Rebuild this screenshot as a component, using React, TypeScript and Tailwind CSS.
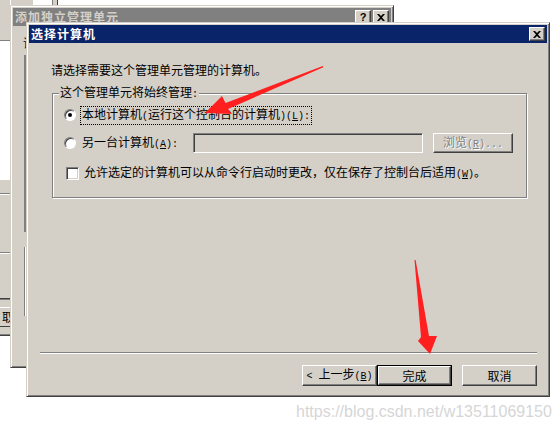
import React from "react";

// classic Windows bevels
const raised =
  "border border-t-white border-l-white border-r-[#404040] border-b-[#404040] shadow-[inset_-1px_-1px_#808080]";
const sunken =
  "border border-t-[#808080] border-l-[#808080] border-r-white border-b-white shadow-[inset_1px_1px_#404040,inset_-1px_-1px_#d4d0c8]";
const windowFrame =
  "border border-t-[#d4d0c8] border-l-[#d4d0c8] border-r-[#404040] border-b-[#404040] shadow-[inset_1px_1px_white,inset_-1px_-1px_#808080]";

const CloseGlyph = () => (
  <svg width="8" height="7" viewBox="0 0 8 7">
    <path d="M0 0h2l2 2 2-2h2L5 3.5 8 7H6L4 5 2 7H0l3-3.5z" fill="black" />
  </svg>
);

const CaptionButton = ({ children }: { children: React.ReactNode }) => (
  <div
    className={`w-[16px] h-[14px] bg-[#d4d0c8] flex items-center justify-center ${raised}`}
  >
    {children}
  </div>
);

// half-width latin text, 6px per char like the dialog's bitmap font
const Half = ({ children }: { children: React.ReactNode }) => (
  <span className="font-['Liberation_Mono',monospace] text-[10px]">{children}</span>
);

const Radio = ({ checked }: { checked?: boolean }) => (
  <span className="w-[12px] h-[12px] shrink-0 rounded-full bg-white border border-t-[#808080] border-l-[#808080] border-r-white border-b-white shadow-[inset_1px_1px_#404040] flex items-center justify-center">
    {checked && <span className="w-[4px] h-[4px] rounded-full bg-black" />}
  </span>
);

const PushButton = ({ children }: { children: React.ReactNode }) => (
  <button
    className={`w-[75px] h-[21px] bg-[#d4d0c8] flex items-center justify-center ${raised}`}
  >
    <span className="whitespace-pre">{children}</span>
  </button>
);

export default function App() {
  return (
    <div className="relative w-[560px] h-[431px] overflow-hidden bg-white text-black text-[12px] leading-[12px] font-['Noto_Sans_CJK_SC',sans-serif]">
      {/* window far behind, left edge */}
      <div className="absolute left-0 top-0 w-[10px] h-[336px] overflow-hidden bg-[#d4d0c8] flex flex-col">
        <div className="h-[40px] shrink-0" />
        <div className="h-[140px] shrink-0 bg-white border-t border-[#808080]" />
        <div className="h-[13px] shrink-0" />
        <div className="h-[2px] shrink-0 border-t border-[#808080] border-b border-b-white" />
        <div className="h-[57px] shrink-0" />
        <div className="h-[2px] shrink-0 border-t border-[#808080] border-b border-b-white" />
        <div className="h-[44px] shrink-0" />
        <div className="h-[2px] shrink-0 border-t border-[#404040] border-b border-b-[#808080]" />
        <div className="h-[7px] shrink-0" />
        <div className="h-[20px] shrink-0 border-t border-white border-b border-b-[#404040] flex items-center pl-[2px] whitespace-nowrap">
          取
        </div>
        <div className="h-[7px] shrink-0" />
        <div className="h-[2px] shrink-0 border-t border-[#808080] border-b border-b-[#404040]" />
      </div>
      <div className="absolute left-[11px] top-0 w-[22px] h-[5px] bg-[#d4d0c8]" />
      <div className="absolute left-[52px] top-0 w-[6px] h-[5px] bg-[#d4d0c8] border-l border-[#808080] border-r border-r-[#404040]" />

      {/* back dialog */}
      <div
        className={`absolute left-[10px] top-[5px] w-[384px] h-[363px] bg-[#d4d0c8] p-[2px] ${windowFrame}`}
      >
        <div className="h-[18px] bg-[#808080] flex items-center px-[2px]">
          <span className="font-bold tracking-[1px] text-[#d4d0c8]">
            添加独立管理单元
          </span>
          <div className="ml-auto flex gap-[2px]">
            <CaptionButton>
              <span className="font-bold text-[11px] leading-[11px] font-['Liberation_Sans',sans-serif]">
                ?
              </span>
            </CaptionButton>
            <CaptionButton>
              <CloseGlyph />
            </CaptionButton>
          </div>
        </div>
        <div className="pl-[10px] pt-[11px]">
          <p className="w-[3px] overflow-hidden whitespace-nowrap">请</p>
          <div className="ml-[1px] mt-[6px] w-[40px] h-[177px] bg-white border-l-2 border-l-[#808080] shadow-[inset_1px_0_#404040]" />
          <div className="ml-[1px] mt-[15px] w-[40px] h-[69px] border-l border-[#808080] shadow-[inset_1px_0_white]" />
        </div>
      </div>

      {/* front dialog */}
      <div
        className={`absolute left-[26px] top-[22px] w-[524px] h-[375px] bg-[#d4d0c8] p-[2px] flex flex-col ${windowFrame}`}
      >
        <div className="h-[18px] shrink-0 bg-[#0a246a] flex items-center px-[2px]">
          <span className="font-bold tracking-[1px] text-white">选择计算机</span>
          <div className="ml-auto">
            <CaptionButton>
              <CloseGlyph />
            </CaptionButton>
          </div>
        </div>

        <div className="flex-1 flex flex-col">
          <p className="ml-[22px] mt-[21px]">请选择需要这个管理单元管理的计算机。</p>

          <fieldset className="ml-[23px] mt-[10px] w-[475px] h-[112px] border border-[#808080] shadow-[inset_1px_1px_white,1px_1px_white]">
            <legend className="ml-[6px] px-[1px] bg-[#d4d0c8]">
              这个管理单元将始终管理<Half>:</Half>
            </legend>

            <div className="mt-[6px] h-[16px] pl-[11px] flex items-center">
              <Radio checked />
              <span className="ml-[4px] px-[1px] py-[1px] border border-dotted border-black whitespace-nowrap">
                本地计算机<Half>(</Half>运行这个控制台的计算机<Half>)(<u>L</u>):</Half>
              </span>
            </div>

            <div className="mt-[10px] h-[20px] pl-[11px] flex items-center">
              <Radio />
              <span className="ml-[6px] w-[111px] whitespace-nowrap">
                另一台计算机<Half>(<u>A</u>):</Half>
              </span>
              <div className={`w-[230px] h-[20px] bg-[#d4d0c8] ${sunken}`} />
              <div
                className={`ml-[10px] w-[80px] h-[20px] bg-[#d4d0c8] flex items-center justify-center text-[#808080] [text-shadow:1px_1px_0_#ffffff] ${raised}`}
              >
                <span>
                  浏览<Half>(<u>R</u>)...</Half>
                </span>
              </div>
            </div>

            <div className="mt-[13px] h-[14px] pl-[13px] flex items-center">
              <span className={`w-[13px] h-[13px] shrink-0 bg-white ${sunken}`} />
              <span className="ml-[5px] whitespace-nowrap">
                允许选定的计算机可以从命令行启动时更改，仅在保存了控制台后适用<Half>(<u>W</u>)</Half>。
              </span>
            </div>
          </fieldset>

          <div className="mt-auto ml-[11px] mr-[10px] h-[2px] border-t border-[#808080] border-b border-b-white" />
          <div className="mt-[11px] mr-[10px] mb-[8px] flex justify-end">
            <PushButton>
              <Half>{"< "}</Half>上一步<Half>(<u>B</u>)</Half>
            </PushButton>
            <div className="w-[75px] h-[21px] border border-black">
              <div
                className={`w-full h-full bg-[#d4d0c8] flex items-center justify-center ${raised}`}
              >
                完成
              </div>
            </div>
            <div className="ml-[10px]">
              <PushButton>取消</PushButton>
            </div>
          </div>
        </div>
      </div>

      {/* watermark */}
      <span className="absolute left-[296px] top-[403px] text-[16px] leading-[18px] text-[#d6d6d6] font-['Liberation_Sans',sans-serif] whitespace-nowrap">
        https://blog.csdn.net/w13511069150
      </span>

      {/* red annotation arrows */}
      <svg
        className="absolute left-0 top-0 pointer-events-none"
        width="560"
        height="431"
        viewBox="0 0 560 431"
      >
        <polygon
          points="322.8,66 225.5,103 222,96 205,113 232,114 228,109 323.3,67.3"
          fill="#ff1f1f"
        />
        <polygon
          points="414.5,260 421,337 418,341 430,354 437,336 429,336 415.6,260"
          fill="#ff1f1f"
        />
      </svg>
    </div>
  );
}
